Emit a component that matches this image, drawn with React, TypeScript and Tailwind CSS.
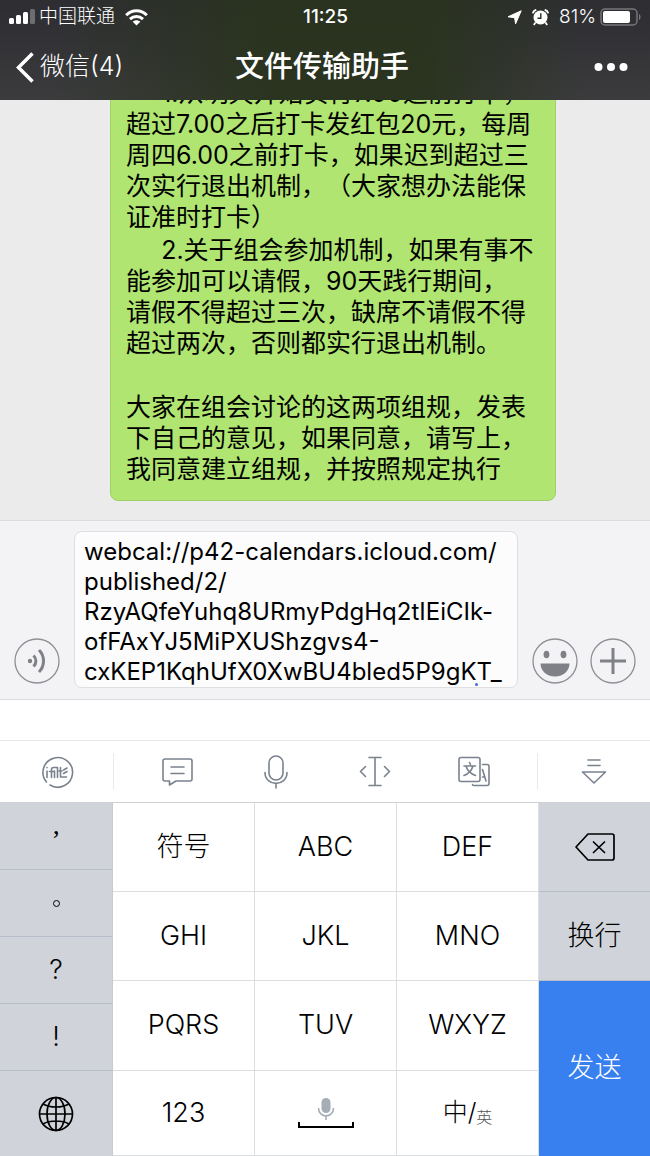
import { useState } from "react";
import type { ReactNode } from "react";

const RULE_ONE = [
  "     1.从明天开始实行7.00之前打卡，",
  "超过7.00之后打卡发红包20元，每周",
  "周四6.00之前打卡，如果迟到超过三",
  "次实行退出机制，（大家想办法能保",
  "证准时打卡）",
].join("\n");

const RULE_TWO = [
  "     2.关于组会参加机制，如果有事不",
  "能参加可以请假，90天践行期间，",
  "请假不得超过三次，缺席不请假不得",
  "超过两次，否则都实行退出机制。",
].join("\n");

const CLOSING = [
  "大家在组会讨论的这两项组规，发表",
  "下自己的意见，如果同意，请写上，",
  "我同意建立组规，并按照规定执行",
].join("\n");

const DRAFT = [
  "webcal://p42-calendars.icloud.com/",
  "published/2/",
  "RzyAQfeYuhq8URmyPdgHq2tIEiCIk-",
  "ofFAxYJ5MiPXUShzgvs4-",
  "cxKEP1KqhUfX0XwBU4bled5P9gKT_",
].join("\n");

const PUNCTUATION = ["，", "。", "?", "!"];

function StatusBar() {
  return (
    <div className="grid h-[34px] grid-cols-[1fr_auto_1fr] items-center pl-[9px] pr-2 text-[19px]">
      <div className="flex items-center">
        <svg width="26" height="16" viewBox="0 0 26 16" fill="#fff" aria-hidden="true">
          <rect x="0" y="9" width="5" height="6" rx="1.5" />
          <rect x="7" y="6" width="5" height="9" rx="1.5" />
          <rect x="14" y="3" width="5" height="12" rx="1.5" />
          <rect x="21" y="0" width="5" height="15" rx="1.5" opacity=".3" />
        </svg>
        <span className="ml-1 font-light">中国联通</span>
        <svg className="ml-2.5" width="23" height="17" viewBox="0 0 23 17" fill="none" stroke="#fff" strokeWidth="3" aria-hidden="true">
          <path d="M1.2 6.2C7 .2 16 .2 21.8 6.2" />
          <path d="M5 10.2c3.8-3.6 9.2-3.6 13 0" />
          <path d="M11.5 16.6l-3.8-3.8c2.2-2 5.4-2 7.6 0z" fill="#fff" stroke="none" />
        </svg>
      </div>
      <time className="font-medium">11:25</time>
      <div className="flex items-center justify-end">
        <svg width="15" height="15" viewBox="0 0 15 15" fill="#fff" stroke="#fff" strokeLinejoin="round" aria-hidden="true">
          <path d="M14.2.8 8.600 13.800 7.600 7.700 1 6.800z" />
        </svg>
        <svg className="ml-2.5" width="17" height="17" viewBox="0 0 17 17" aria-hidden="true">
          <circle cx="8.5" cy="8.5" r="7" fill="#fff" />
          <path d="M.8 4.3A4.5 4.5 0 0 1 4.3.8M12.7.8a4.5 4.5 0 0 1 3.5 3.5M3.5 13.5l-1.7 2.5M13.5 13.5l1.7 2.5" stroke="#fff" strokeWidth="1.8" />
          <path d="M8.8 4.2v5H5.5" fill="none" stroke="#2a301f" strokeWidth="1.4" />
        </svg>
        <span className="ml-2.5 font-light">81%</span>
        <svg className="ml-1" width="42" height="18" viewBox="0 0 42 18" aria-hidden="true">
          <rect x="1" y="1" width="36" height="16" rx="4" fill="none" stroke="#77777a" strokeWidth="1.5" />
          <rect x="3" y="3" width="27" height="12" rx="2" fill="#fff" />
          <path d="M39 6c2 .8 2 5.2 0 6z" fill="#77777a" />
        </svg>
      </div>
    </div>
  );
}

function NavBar() {
  return (
    <div className="grid h-[66px] grid-cols-[1fr_auto_1fr] items-center pl-4 pr-[22px]">
      <button type="button" className="flex items-center gap-1.5 text-[25px] font-light">
        <svg width="18" height="31" viewBox="0 0 18 31" fill="none" stroke="#fff" strokeWidth="3.5" aria-hidden="true">
          <path d="M16.5 1.5 2.5 15.5l14 14" />
        </svg>
        微信(4)
      </button>
      <h1 className="text-[29px] font-medium">文件传输助手</h1>
      <button type="button" aria-label="更多" className="justify-self-end">
        <svg width="34" height="10" viewBox="0 0 34 10" fill="#fff">
          <circle cx="4.5" cy="5" r="4" />
          <circle cx="17" cy="5" r="4" />
          <circle cx="29.5" cy="5" r="4" />
        </svg>
      </button>
    </div>
  );
}

function RoundButton({ label, children }: { label: string; children: ReactNode }) {
  return (
    <button type="button" aria-label={label} className="mb-1 shrink-0">
      <svg width="46" height="46" viewBox="0 0 46 46" fill="none" stroke="#7f8186">
        <circle cx="23" cy="23" r="22" strokeWidth="1.3" stroke="#8e9095" />
        {children}
      </svg>
    </button>
  );
}

function Composer() {
  const [draft, setDraft] = useState(DRAFT);

  return (
    <div className="flex shrink-0 items-end border-y border-[#dcdcde] bg-[#f3f3f6] px-3.5 pb-[11px] pt-2.5">
      <RoundButton label="语音">
        <circle cx="16" cy="23" r="2.2" fill="#7f8186" stroke="none" />
        <path d="M19.5 17.5c3.2 3 3.2 8 0 11" strokeWidth="3" />
        <path d="M25 12c6 6 6 16 0 22" strokeWidth="3" />
      </RoundButton>
      <div className="relative ml-3.5 flex flex-1">
        <textarea
          aria-label="消息"
          rows={5}
          spellCheck={false}
          value={draft}
          onChange={(e) => setDraft(e.target.value)}
          className="w-full resize-none overflow-hidden whitespace-pre rounded-lg border border-[#dfdfe2] bg-[#fcfcfd] pl-[9px] pt-[5px] text-[24px] leading-[30px] text-black outline-none"
        />
        <span className="absolute bottom-0.5 right-10 size-[3px] rounded-full bg-[#3f6bd8]" />
      </div>
      <div className="ml-3.5 flex gap-3">
        <RoundButton label="表情">
          <ellipse cx="14.5" cy="16.5" rx="2.9" ry="3.8" fill="#7f8186" stroke="none" />
          <ellipse cx="31.5" cy="16.5" rx="2.9" ry="3.8" fill="#7f8186" stroke="none" />
          <path d="M8.5 25.5h29c0 7-6 13-14.5 13s-14.5-6-14.5-13z" fill="#7f8186" stroke="none" />
        </RoundButton>
        <RoundButton label="更多功能">
          <path d="M23 10v26M10 23h26" strokeWidth="3" />
        </RoundButton>
      </div>
    </div>
  );
}

function ToolButton({ label, children }: { label: string; children: ReactNode }) {
  return (
    <button type="button" aria-label={label} className="flex items-center justify-center">
      <svg width="36" height="36" viewBox="0 0 36 36" fill="none" stroke="#7a828e" strokeWidth="1.6" strokeLinecap="round" strokeLinejoin="round">
        {children}
      </svg>
    </button>
  );
}

function KeyboardToolbar() {
  return (
    <div className="grid h-[62px] shrink-0 grid-cols-[113fr_425fr_112fr] border-t border-[#e6e7e9]">
      <ToolButton label="输入法">
        <path d="M7.5 28A14.8 14.8 0 1 1 11 31" />
        <path d="M8 17v6.500M8 13.500v.2M10.500 17.500h4M12.500 23.500v-8q0-2 2-2h4v10M15.500 17v6.500M21.500 13.500v9.500h6M20 17h3M24.500 16l3.500-2M24.500 19.500l3.500-2" />
      </ToolButton>
      <div className="my-3 grid grid-cols-4 border-x border-[#e9eaec] px-3.5">
        <ToolButton label="快捷短语">
          <path d="M6 5h25q2 0 2 2v18q0 2-2 2H17l-6.500 4v-4H6q-2 0-2-2V7q0-2 2-2zM12 13h13M12 19.500h13" />
        </ToolButton>
        <ToolButton label="语音输入">
          <rect x="11" y="2" width="14" height="24" rx="7" />
          <path d="M7 18.500c0 14.500 22 14.500 22 0M18 29.500V34" />
        </ToolButton>
        <ToolButton label="移动光标">
          <path d="M12 3.500h12M12 31.500h12M18 3.500v28M8.500 12.500 3.500 17.500l5 5M27.500 12.500l5 5-5 5" />
        </ToolButton>
        <ToolButton label="翻译">
          <rect x="3" y="3.500" width="21" height="24" rx="2" />
          <path d="M13.500 8.500l1 2M8 12h11.500M17 12c-1.500 5-5 8-9 9.500M10 12c1.500 5 5 8 9.500 9.500M26.500 10.500H31q2 0 2 2V29.500q0 2-2 2H18q-1.500 0-1.500-1M26.500 15.500l3.500 11.500M26.500 23h2.500" />
        </ToolButton>
      </div>
      <ToolButton label="收起键盘">
        <path d="M12 6h12M12 11.500h12M6.500 18h23L18 29z" />
      </ToolButton>
    </div>
  );
}

function Key({ label, children }: { label?: string; children: ReactNode }) {
  return (
    <button type="button" aria-label={label} className="flex items-center justify-center border-b border-r border-[#dcdee0] bg-white">
      {children}
    </button>
  );
}

function PunctuationMark({ mark }: { mark: string }) {
  if (mark === "，") return <span className="pt-2 font-['Liberation_Serif',serif] font-normal">’</span>;
  if (mark === "。") return <span className="size-[7px] rounded-full border border-black" />;
  return <span>{mark}</span>;
}

function Keyboard() {
  const sideKey = "flex items-center justify-center border-b border-[#b9bfca] bg-[#d0d4da]";

  return (
    <div className="grid shrink-0 grid-cols-[113fr_142fr_142fr_142fr_111fr] grid-rows-[89px_89px_90px_85px] border-t border-[#cfd1d4] text-[27px] font-light text-black">
      <div className="row-span-3 grid grid-rows-4 border-r border-[#c6cad1]">
        {PUNCTUATION.map((p) => (
          <button key={p} type="button" aria-label={p} className={sideKey}>
            <PunctuationMark mark={p} />
          </button>
        ))}
      </div>
      <Key>符号</Key>
      <Key>ABC</Key>
      <Key>DEF</Key>
      <button type="button" aria-label="删除" className={sideKey}>
        <svg width="42" height="30" viewBox="0 0 42 30" fill="none" stroke="#000" strokeWidth="1.7" strokeLinejoin="round">
          <path d="M14 2h24q2 0 2 2v22q0 2-2 2H14L2 15zM19 9.500l12 11.500M31 9.500 19 21" />
        </svg>
      </button>
      <Key>GHI</Key>
      <Key>JKL</Key>
      <Key>MNO</Key>
      <button type="button" className={sideKey}>换行</button>
      <Key>PQRS</Key>
      <Key>TUV</Key>
      <Key>WXYZ</Key>
      <button type="button" className="row-span-2 bg-[#3880ef] text-white">发送</button>
      <button type="button" aria-label="切换键盘" className="flex items-center justify-center border-r border-[#c6cad1] bg-[#d0d4da]">
        <svg width="36" height="36" viewBox="0 0 36 36" fill="none" stroke="#000" strokeWidth="1.7">
          <circle cx="18" cy="18" r="16.5" />
          <ellipse cx="18" cy="18" rx="9" ry="16.5" />
          <path d="M18 1.500v33M1.500 18h33M5 8c7 4 19 4 26 0M5 28c7-4 19-4 26 0" />
        </svg>
      </button>
      <Key>123</Key>
      <Key label="空格">
        <svg width="56" height="32" viewBox="0 0 56 32" fill="none">
          <rect x="23.5" y="1" width="9" height="15" rx="4.5" fill="#a5adb7" />
          <path d="M20.500 11c0 10.500 15 10.500 15 0M28 19v4" stroke="#a5adb7" strokeWidth="1.6" />
          <path d="M1 25v5h54v-5" stroke="#000" strokeWidth="2" />
        </svg>
      </Key>
      <Key>
        <span className="text-[25px]">中/</span>
        <span className="pt-2 text-base text-[#555]">英</span>
      </Key>
    </div>
  );
}

export default function App() {
  return (
    <div className="flex h-screen flex-col overflow-hidden bg-white font-['Inter','Noto_Sans_CJK_SC',sans-serif]">
      <header className="shrink-0 bg-[linear-gradient(to_right,transparent_8%,#29331ce6_42%,#29331ce6_65%,transparent_90%),linear-gradient(to_bottom,#2d2d32,#3b3b3d)] text-white">
        <StatusBar />
        <NavBar />
      </header>

      <main className="flex min-h-0 flex-1 flex-col justify-end overflow-hidden bg-[#ebebeb] pb-[19px] pl-[110px] pr-[94px]">
        <div className="flex shrink-0 flex-col gap-0.5 whitespace-pre rounded-lg border border-[#9fd066] bg-[#afe570] px-[15px] pb-[15px] pt-4 text-[25px] leading-[31px] text-black [text-spacing-trim:space-all]">
          <p>{RULE_ONE}</p>
          <p>{RULE_TWO}</p>
          <p className="mt-[31px]">{CLOSING}</p>
        </div>
      </main>

      <Composer />
      <div className="h-10 shrink-0" />
      <KeyboardToolbar />
      <Keyboard />
    </div>
  );
}
